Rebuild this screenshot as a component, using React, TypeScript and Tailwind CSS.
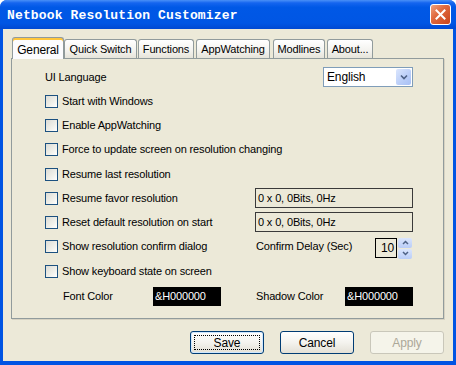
import React from "react";

const F = "font-['Liberation_Sans',Arial,sans-serif] text-[11px] tracking-[-0.15px] text-black";

function Tab({ label, w, ml = 0, selected = false }: { label: string; w: number; ml?: number; selected?: boolean }) {
  if (selected) {
    return (
      <div
        className="relative z-10 -mb-px flex h-[22px] items-center justify-center rounded-t-[3px] border border-b-0 border-[#919B9C] bg-[#FCFCFE] pt-[2px] shadow-[inset_0_2px_0_#FFC73C,inset_0_1px_0_#E68B2C]"
        style={{ width: w, marginLeft: ml }}
      >
        <span className="text-[12px]">{label}</span>
      </div>
    );
  }
  return (
    <div
      className="flex h-[19px] items-center justify-center rounded-t-[3px] border border-b-0 border-[#919B9C] bg-[linear-gradient(180deg,#ffffff_0%,#f3f2ee_60%,#e6e4da_100%)] pt-[1px]"
      style={{ width: w, marginLeft: ml }}
    >
      <span>{label}</span>
    </div>
  );
}

function Check({ label }: { label: string }) {
  return (
    <div className="flex items-center">
      <div className="h-[13px] w-[13px] shrink-0 border border-[#1C5180] bg-[linear-gradient(135deg,#dcdcd6_0%,#f0f0ea_60%,#ffffff_100%)]" />
      <span className="ml-[4px] whitespace-nowrap">{label}</span>
    </div>
  );
}

function TextBox({ value }: { value: string }) {
  return (
    <div className="flex h-[20px] w-[158px] items-center border border-[#3a3a3a] pl-[2px]">
      <span>{value}</span>
    </div>
  );
}

function ColorBox({ value }: { value: string }) {
  return (
    <div className="flex h-[19px] w-[68px] items-center bg-black pl-[2px]">
      <span className="text-white">{value}</span>
    </div>
  );
}

export default function App() {
  return (
    <div className={`h-[365px] w-[456px] bg-white ${F}`}>
      <div className="flex h-[365px] w-[456px] flex-col overflow-hidden rounded-t-[7px] bg-[#0054E3]">
        {/* Title bar */}
        <div className="flex h-[29px] shrink-0 items-center bg-[linear-gradient(180deg,#4a90f7_0%,#1565ef_10%,#0058e6_25%,#0056e4_80%,#0049d2_100%)] pl-[7px] pr-[5px] pt-[3px]">
          <span className="font-['Liberation_Mono',monospace] text-[13px] font-bold tracking-[0.15px] text-white">
            Netbook Resolution Customizer
          </span>
          <div className="ml-auto -mt-[3px] flex h-[21px] w-[21px] items-center justify-center rounded-[3px] border border-white bg-[linear-gradient(135deg,#f0a27f_0%,#e06a3f_40%,#c9441b_100%)]">
            <svg width="11" height="11" viewBox="0 0 11 11">
              <path d="M1.5 1.5 L9.5 9.5 M9.5 1.5 L1.5 9.5" stroke="white" strokeWidth="2" strokeLinecap="square" />
            </svg>
          </div>
        </div>

        {/* Body */}
        <div className="mx-[3px] flex h-[332px] flex-col bg-[#ECE9D8]">
          {/* Tabs */}
          <div className="flex h-[29px] items-end pl-[9px]">
            <Tab label="General" w={52} selected />
            <Tab label="Quick Switch" w={73} />
            <Tab label="Functions" w={56} ml={1} />
            <Tab label="AppWatching" w={74} ml={2} />
            <Tab label="Modlines" w={52} ml={3} />
            <Tab label="About..." w={46} ml={2} />
          </div>

          {/* Panel */}
          <div className="ml-[8px] h-[261px] w-[433px] border border-[#919B9C] bg-[#ECE9D8] pl-[33px] pt-[8px] shadow-[1px_1px_0_#d6d2c2]">
            <div className="grid grid-cols-[210px_158px]">
              {/* row 0 */}
              <div className="flex h-[20px] items-center">UI Language</div>
              <div className="flex h-[20px] justify-end">
                <div className="flex h-[20px] w-[90px] items-center border border-[#7F9DB9] bg-white pl-[3px] pr-px">
                  <span className="text-[12px]">English</span>
                  <div className="ml-auto flex h-[16px] w-[15px] items-center justify-center rounded-[2px] bg-[linear-gradient(135deg,#dbe6fd_0%,#b9cdf8_60%,#a8c0f5_100%)]">
                    <svg width="8" height="6" viewBox="0 0 8 6">
                      <path d="M1 1.5 L4 4.5 L7 1.5" stroke="#4D6185" strokeWidth="1.6" fill="none" />
                    </svg>
                  </div>
                </div>
              </div>

              {/* row 1 */}
              <div className="col-span-2 mt-[2px] flex h-[24px] items-center">
                <Check label="Start with Windows" />
              </div>
              {/* row 2 */}
              <div className="col-span-2 flex h-[24px] items-center">
                <Check label="Enable AppWatching" />
              </div>
              {/* row 3 */}
              <div className="col-span-2 flex h-[25px] items-center">
                <Check label="Force to update screen on resolution changing" />
              </div>
              {/* row 4 */}
              <div className="col-span-2 flex h-[24px] items-center">
                <Check label="Resume last resolution" />
              </div>
              {/* row 5 */}
              <div className="flex h-[24px] items-center">
                <Check label="Resume favor resolution" />
              </div>
              <div className="flex h-[24px] items-center">
                <TextBox value="0 x 0, 0Bits, 0Hz" />
              </div>
              {/* row 6 */}
              <div className="flex h-[24px] items-center">
                <Check label="Reset default resolution on start" />
              </div>
              <div className="flex h-[24px] items-center">
                <TextBox value="0 x 0, 0Bits, 0Hz" />
              </div>
              {/* row 7 */}
              <div className="flex h-[25px] items-center">
                <Check label="Show resolution confirm dialog" />
              </div>
              <div className="flex h-[25px] items-center">
                <span className="ml-px">Confirm Delay (Sec)</span>
                <div className="ml-auto mr-px mt-[3px] flex items-center">
                  <div className="flex h-[20px] w-[22px] items-center justify-end border border-black pr-[2px]">
                    <span className="text-[12px]">10</span>
                  </div>
                  <div className="ml-px flex h-[21px] w-[14px] flex-col gap-px">
                    <div className="flex h-[10px] items-center justify-center rounded-[2px] bg-[linear-gradient(180deg,#dbe6fd_0%,#b9cdf8_100%)]">
                      <svg width="7" height="5" viewBox="0 0 7 5">
                        <path d="M1 4 L3.5 1.5 L6 4" stroke="#4D6185" strokeWidth="1.5" fill="none" />
                      </svg>
                    </div>
                    <div className="flex h-[10px] items-center justify-center rounded-[2px] bg-[linear-gradient(180deg,#dbe6fd_0%,#b9cdf8_100%)]">
                      <svg width="7" height="5" viewBox="0 0 7 5">
                        <path d="M1 1 L3.5 3.5 L6 1" stroke="#4D6185" strokeWidth="1.5" fill="none" />
                      </svg>
                    </div>
                  </div>
                </div>
              </div>
              {/* row 8 */}
              <div className="col-span-2 flex h-[24px] items-center">
                <Check label="Show keyboard state on screen" />
              </div>
              {/* row 9 */}
              <div className="flex h-[27px] items-center pl-[18px]">
                <span>Font Color</span>
                <div className="ml-auto mr-[34px]">
                  <ColorBox value="&H000000" />
                </div>
              </div>
              <div className="flex h-[27px] items-center pl-px">
                <span>Shadow Color</span>
                <div className="ml-auto">
                  <ColorBox value="&H000000" />
                </div>
              </div>
            </div>
          </div>

          {/* Buttons */}
          <div className="mt-[12px] flex justify-end gap-[16px] pr-[9px]">
            <div className="flex h-[23px] w-[74px] items-center justify-center rounded-[3px] border border-[#003C74] bg-[linear-gradient(180deg,#ffffff_0%,#f4f3ee_50%,#e3e0d6_100%)] p-[3px] shadow-[inset_0_0_0_1px_#cee7ff]">
              <div className="flex h-full w-full items-center justify-center border border-dotted border-black">
                <span className="text-[12px]">Save</span>
              </div>
            </div>
            <div className="flex h-[23px] w-[74px] items-center justify-center rounded-[3px] border border-[#003C74] bg-[linear-gradient(180deg,#ffffff_0%,#f4f3ee_50%,#e3e0d6_100%)]">
              <span className="text-[12px]">Cancel</span>
            </div>
            <div className="flex h-[23px] w-[74px] items-center justify-center rounded-[3px] border border-[#C9C7BA] bg-[#F5F4EA]">
              <span className="text-[12px] text-[#ACA899]">Apply</span>
            </div>
          </div>
        </div>
      </div>
    </div>
  );
}
